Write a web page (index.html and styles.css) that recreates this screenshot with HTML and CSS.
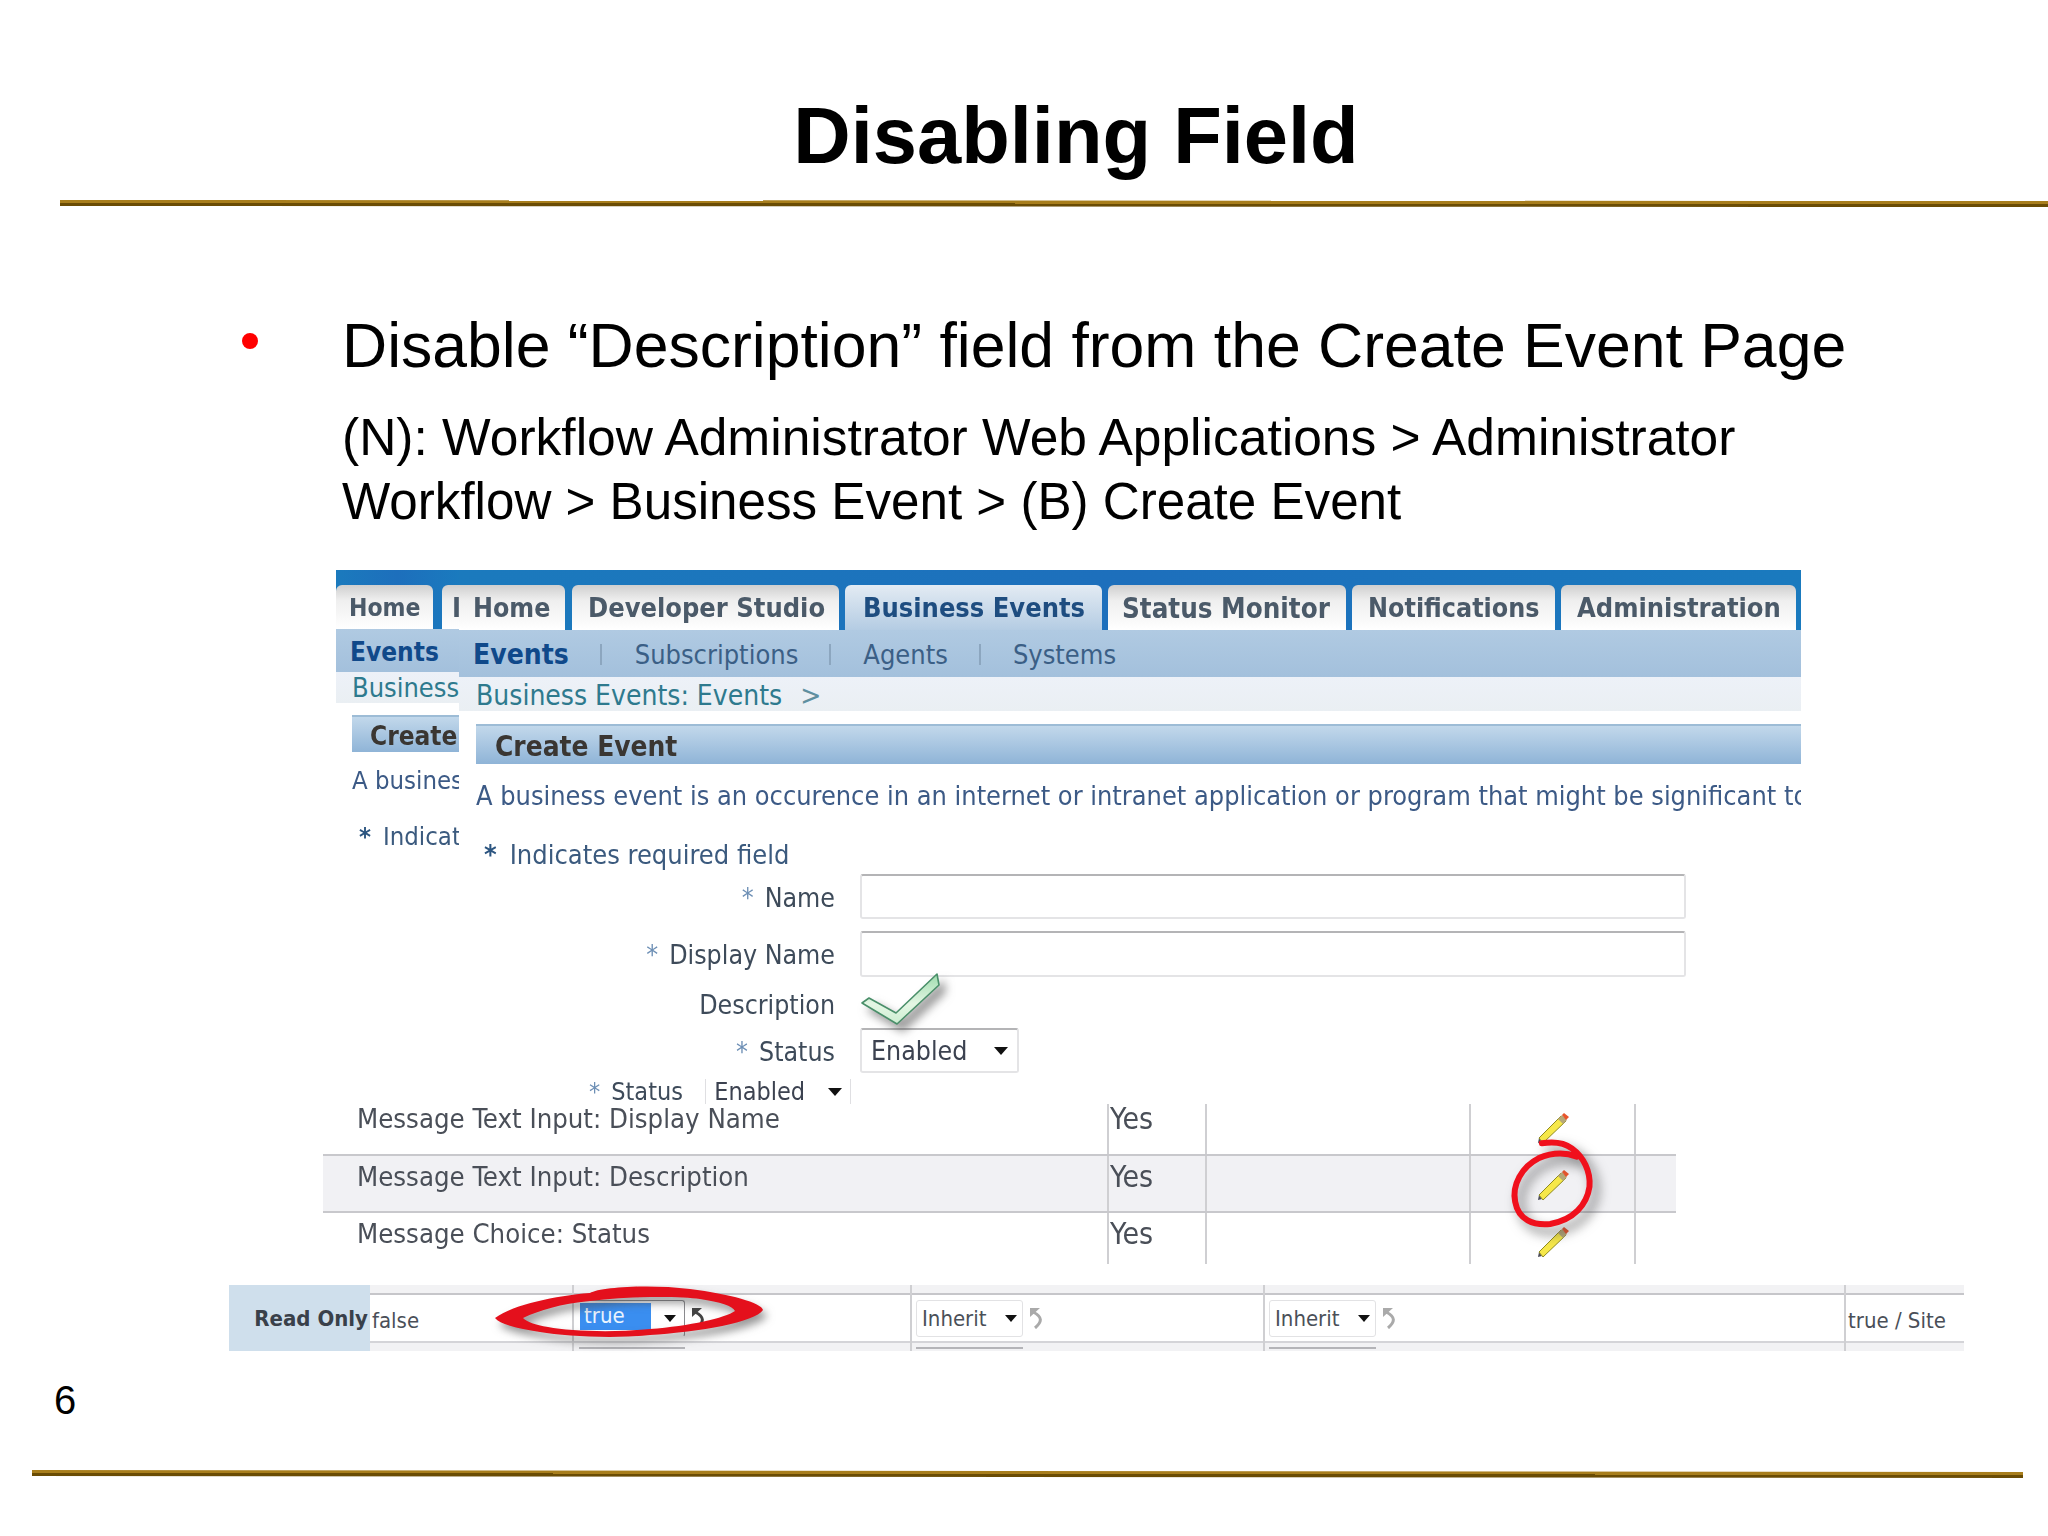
FILE: index.html
```html
<!DOCTYPE html>
<html lang="en">
<head>
<meta charset="utf-8">
<title>Disabling Field</title>
<link rel="stylesheet" href="styles.css">
</head>
<body>
<main class="slide">
  <header class="title-wrap"><h1 class="title">Disabling Field</h1></header>
  <div class="rule rule-top"></div>
  <section class="intro">
    <div class="dot"></div>
    <div class="intro-text">
      <p class="lead">Disable “Description” field from the Create Event Page</p>
      <p class="path">(N): Workflow Administrator Web Applications &gt; Administrator<br><span class="path-2">Workflow &gt; Business Event &gt; (B) Create Event</span></p>
    </div>
  </section>

  <section class="screen">
    <div class="crops">
      <div class="crop-left">
        <div class="tabs tabs-left">
          <div class="tab tab-a">Home</div>
          <div class="tab tab-b">I</div>
        </div>
        <div class="subnav subnav-left"><b class="sub-on">Events</b></div>
        <div class="crumb crumb-left">Business</div>
        <div class="pagehead pagehead-left">Create</div>
        <div class="desc desc-left">A busines</div>
        <div class="req req-left"><span class="star">*</span>Indicat</div>
      </div>
      <div class="crop-main">
        <div class="tabs tabs-main">
          <div class="tab t-home">Home</div>
          <div class="tab t-dev">Developer Studio</div>
          <div class="tab t-biz tab-on">Business Events</div>
          <div class="tab t-stat">Status Monitor</div>
          <div class="tab t-note">Notifications</div>
          <div class="tab t-adm">Administration</div>
        </div>
        <div class="subnav subnav-main">
          <b class="sub-on">Events</b><i class="sep"></i><span>Subscriptions</span><i class="sep"></i><span>Agents</span><i class="sep"></i><span>Systems</span>
        </div>
        <div class="crumb crumb-main">Business Events: Events<span class="gt">&gt;</span></div>
        <div class="pagehead pagehead-main">Create Event</div>
        <div class="desc desc-main">A business event is an occurence in an internet or intranet application or program that might be significant to</div>
        <div class="req req-main"><span class="star">*</span>Indicates required field</div>
        <div class="form">
          <div class="lbl r1"><span class="star2">*</span>Name</div>
          <div class="input r1"></div>
          <div class="lbl r2"><span class="star2">*</span>Display Name</div>
          <div class="input r2"></div>
          <div class="lbl r3">Description</div>
          <div class="ctl r3">
            <svg class="check" viewBox="0 0 90 60" aria-hidden="true">
              <defs><linearGradient id="chk" x1="0" y1="0" x2="0" y2="1"><stop offset="0" stop-color="#9fdcae"/><stop offset=".6" stop-color="#e4f6e4"/><stop offset="1" stop-color="#cdeed2"/></linearGradient></defs>
              <polygon points="3,33 10,28 37,43 78,4 80,15 38,54" fill="url(#chk)" stroke="#4a8f6a" stroke-width="1.6" stroke-linejoin="round"/>
            </svg>
          </div>
          <div class="lbl r4"><span class="star2">*</span>Status</div>
          <div class="select r4"><span>Enabled</span><i class="caret"></i></div>
        </div>
      </div>
    </div>

    <div class="status2">
      <span class="star2">*</span><span class="status2-lbl">Status</span>
      <div class="status2-sel"><span>Enabled</span><i class="caret"></i></div>
    </div>

    <div class="table">
      <div class="row row1">
        <div class="c c1">Message Text Input: Display Name</div>
        <div class="c c2">Yes</div>
        <div class="c c3"></div>
        <div class="c c4">
          <svg class="pencil" viewBox="0 0 32 32" aria-hidden="true"><polygon points="5,30 1,31 2,26" fill="#4a4a58"/><polygon points="2,26 24,4 29,9 6,31" fill="#f6e84a" stroke="#8f8a20" stroke-width="1"/><polygon points="21,7 25,3 30,8 26,12" fill="#b6a878"/><polygon points="25,3 27,1 32,5 29,8" fill="#e8552c"/></svg>
        </div>
        <div class="c c5"></div>
      </div>
      <div class="row row2">
        <div class="c c1">Message Text Input: Description</div>
        <div class="c c2">Yes</div>
        <div class="c c3"></div>
        <div class="c c4">
          <svg class="pencil" viewBox="0 0 32 32" aria-hidden="true"><polygon points="5,30 1,31 2,26" fill="#4a4a58"/><polygon points="2,26 24,4 29,9 6,31" fill="#f6e84a" stroke="#8f8a20" stroke-width="1"/><polygon points="21,7 25,3 30,8 26,12" fill="#b6a878"/><polygon points="25,3 27,1 32,5 29,8" fill="#e8552c"/></svg>
        </div>
        <div class="c c5"></div>
      </div>
      <div class="row row3">
        <div class="c c1">Message Choice: Status</div>
        <div class="c c2">Yes</div>
        <div class="c c3"></div>
        <div class="c c4">
          <svg class="pencil" viewBox="0 0 32 32" aria-hidden="true"><polygon points="5,30 1,31 2,26" fill="#4a4a58"/><polygon points="2,26 24,4 29,9 6,31" fill="#f6e84a" stroke="#8f8a20" stroke-width="1"/><polygon points="21,7 25,3 30,8 26,12" fill="#b6a878"/><polygon points="25,3 27,1 32,5 29,8" fill="#e8552c"/></svg>
        </div>
        <div class="c c5"></div>
      </div>
      <svg class="ring" viewBox="300 130 320 300" aria-hidden="true">
        <path d="M425 155 C455 150 490 152 515 170 C550 195 572 240 568 285 C560 340 520 385 450 397 C400 402 355 385 345 330 C335 280 365 225 415 200 C450 185 490 180 530 195" fill="none" stroke="#f0101c" stroke-width="18" stroke-linecap="round"/>
      </svg>
    </div>

    <div class="band">
      <div class="b-cell b-label"><b>Read Only</b></div>
      <div class="b-cell b-first"><div class="b-body"><span class="b-false">false</span></div></div>
      <div class="b-cell"><div class="b-body">
        <div class="mini mini-true"><span class="picked">true</span><i class="caret caret-sm"></i></div>
        <svg class="undo" viewBox="0 0 14 22" aria-hidden="true"><path d="M1 1 L11 1 L1 10 Z" fill="#444"/><path d="M4 5 C14 10 13 15 6 21" fill="none" stroke="#444" stroke-width="3"/></svg>
      </div><div class="peek peek-true"></div></div>
      <div class="b-cell"><div class="b-body">
        <div class="mini"><span>Inherit</span><i class="caret caret-sm"></i></div>
        <svg class="undo" viewBox="0 0 14 22" aria-hidden="true"><path d="M1 1 L11 1 L1 10 Z" fill="#aaa"/><path d="M4 5 C14 10 13 15 6 21" fill="none" stroke="#aaa" stroke-width="3"/></svg>
      </div><div class="peek"></div></div>
      <div class="b-cell"><div class="b-body">
        <div class="mini"><span>Inherit</span><i class="caret caret-sm"></i></div>
        <svg class="undo" viewBox="0 0 14 22" aria-hidden="true"><path d="M1 1 L11 1 L1 10 Z" fill="#aaa"/><path d="M4 5 C14 10 13 15 6 21" fill="none" stroke="#aaa" stroke-width="3"/></svg>
      </div><div class="peek"></div></div>
      <div class="b-cell"><div class="b-body"><span class="b-site">true / Site</span></div></div>
      <svg class="oval" viewBox="490 1280 290 70" aria-hidden="true">
        <path fill-rule="evenodd" fill="#e4101c" d="M495 1318 C515 1304 555 1296 590 1293 C600 1287 650 1284 690 1289 C730 1294 762 1303 763 1310 C755 1322 700 1332 650 1335 C610 1339 565 1336 540 1332 C515 1328 500 1324 495 1318 Z M523 1318 C540 1310 560 1304 590 1301 C630 1296 680 1296 700 1299 C720 1302 733 1306 735 1311 C725 1318 690 1326 650 1329 C610 1333 570 1331 548 1327 C535 1325 527 1322 523 1318 Z"/>
      </svg>
    </div>
  </section>

  <footer class="foot">
    <div class="pageno">6</div>
    <div class="rule rule-bottom"></div>
  </footer>
</main>
</body>
</html>
```
FILE: styles.css
```css
* { box-sizing: border-box; }
html, body { margin: 0; padding: 0; background: #fff; }
.slide { width: 2048px; height: 1536px; overflow: hidden; font-family: "Liberation Sans", Arial, sans-serif; color: #000; }

.title-wrap { height: 200px; padding: 0 0 19px 104px; display: flex; justify-content: center; align-items: flex-end; }
.title { margin: 0; font-size: 79.5px; line-height: 90px; font-weight: 700; }

.rule { height: 6px; background: linear-gradient(#a87e1c 0 50%, #6a4c04 50%); transform-origin: 0 50%; }
.rule-top { margin-left: 60px; transform: rotate(.03deg); }
.rule-bottom { margin-left: 32px; width: 1991px; transform: rotate(.055deg); }

.intro { height: 364px; display: flex; padding: 103px 0 0 242px; }
.dot { width: 16px; height: 16px; border-radius: 50%; background: #f00; margin: 24px 84px 0 0; flex: none; }
.lead { margin: 0; font-size: 62.5px; line-height: 72px; white-space: nowrap; }
.path { margin: 24px 0 0; font-size: 51.5px; line-height: 64px; white-space: nowrap; }
.path-2 { font-size: 51.15px; }

.screen { font-family: "DejaVu Sans Condensed", "DejaVu Sans", sans-serif; font-stretch: condensed; font-size: 27px; filter: blur(.5px); }
.crops { display: grid; grid-template-columns: 123px 1342px; margin-left: 336px; width: 1465px; height: 509px; }
.crop-left, .crop-main { min-width: 0; overflow: hidden; white-space: nowrap; }

.tabs { position: relative; display: flex; align-items: flex-end; background: linear-gradient(90deg, #1b7abd, #1d6fbc 50%, #1a7abe); }
.tabs-left { height: 59px; padding-top: 15px; }
.tabs-main { height: 60px; padding-top: 15px; }
.tab { height: 44px; border-radius: 6px 6px 0 0; background: linear-gradient(#cfcfcf, #efefef 35%, #fff); color: #4b5a69; font-weight: 700; line-height: 46px; overflow: hidden; white-space: nowrap; flex: none; }
.tabs-main .tab { height: 45px; }
.tab-a { width: 97px; padding-left: 13px; font-size: 24.5px; }
.tab-b { width: 17px; margin-left: 9px; padding-left: 10px; border-radius: 6px 0 0 0; }
.t-home { width: 106px; padding-left: 14px; border-top-left-radius: 0; font-size: 26.5px; }
.t-dev { width: 267px; margin-left: 7px; padding-left: 16px; }
.t-biz { width: 257px; margin-left: 6px; padding-left: 18px; }
.t-stat { width: 238px; margin-left: 6px; padding-left: 14px; font-size: 27.5px; }
.t-note { width: 203px; margin-left: 6px; padding-left: 16px; font-size: 26.6px; }
.t-adm { width: 235px; margin-left: 6px; padding-left: 16px; }
.tab-on { background: linear-gradient(#e3ebf3, #b4cce3); color: #1e4d80; }

.subnav { display: flex; align-items: center; background: linear-gradient(#b0cae2, #a3c0dc); color: #3b5f86; padding-top: 2px; }
.subnav-left { height: 43px; padding-left: 14px; }
.subnav-left .sub-on { font-size: 26px; }
.subnav-main { height: 47px; padding-left: 14px; }
.sub-on { color: #10498a; font-weight: 700; font-size: 28px; }
.sep { width: 2px; height: 21px; background: #8ca6bf; margin: 0 33px 0 31px; }
.sep:nth-of-type(n+2) { margin-right: 32px; }

.crumb { display: flex; align-items: center; background: linear-gradient(#edf1f8, #eaeff3); color: #2e7a8e; overflow: hidden; }
.crumb-left { height: 31px; padding-left: 16px; }
.crumb-main { height: 34px; padding-left: 17px; font-size: 28px; padding-top: 2px; }
.gt { margin-left: 18px; color: #5f8fa0; }

.pagehead { background: linear-gradient(#c2d8eb, #8fb4d7); border-top: 2px solid #9dbcd6; color: #3a3632; font-weight: 700; display: flex; align-items: center; padding-top: 2px; }
.pagehead-left { height: 37px; margin: 12px 0 0 16px; padding-left: 18px; font-size: 26px; }
.pagehead-main { height: 40px; margin: 13px 0 0 17px; padding-left: 19px; font-size: 27.8px; }

.desc { color: #3c5a86; line-height: 30px; height: 30px; overflow: hidden; }
.desc-left { margin: 13px 0 0 16px; font-size: 25.5px; }
.desc-main { margin: 17px 0 0 17px; font-size: 26.9px; }

.req { color: #3b5a7e; line-height: 30px; height: 30px; }
.req-left { margin: 26px 0 0 23px; font-size: 25.5px; }
.req-main { margin: 29px 0 0 25px; }
.star { color: #2c5580; font-weight: 700; margin-right: 12px; }
.req-main .star { margin-right: 13px; }
.star2 { color: #6d8fb5; margin-right: 11px; }

.form { display: grid; grid-template-columns: 376px 826px; column-gap: 25px; grid-template-rows: 45px 58px 51px 45px; margin-top: 4px; align-items: stretch; font-size: 26.5px; }
.lbl { text-align: right; color: #3e4b5a; }
.lbl.r1 { padding-top: 1px; line-height: 45px; }
.lbl.r2 { padding-top: 13px; line-height: 46px; }
.lbl.r3 { padding-top: 13px; line-height: 30px; }
.lbl.r4 { padding-top: 1px; line-height: 45px; }
.input { border: 2px solid #e4e4e6; border-top-color: #b4b4b6; border-radius: 3px; background: #fff; }
.input.r2 { margin-top: 12px; }
.ctl { position: relative; }
.check { position: absolute; left: -1px; top: -7px; width: 90px; height: 60px; filter: drop-shadow(6px 7px 5px rgba(60, 60, 60, .55)); overflow: visible; }
.select { width: 159px; display: flex; align-items: center; justify-content: space-between; padding: 0 9px 0 9px; border: 2px solid #e4e4e6; border-top-color: #b4b4b6; border-radius: 3px; color: #3c4250; font-size: 26.5px; }
.caret { display: block; width: 0; height: 0; border-left: 7px solid transparent; border-right: 7px solid transparent; border-top: 8px solid #111; }
.caret-sm { border-left-width: 6px; border-right-width: 6px; border-top-width: 7px; }

.status2 { display: flex; align-items: center; height: 25px; padding-left: 589px; color: #3e4b5a; white-space: nowrap; font-size: 25px; }
.status2-lbl { width: 94px; }
.status2-sel { width: 146px; height: 25px; display: flex; align-items: center; justify-content: space-between; padding: 0 8px 0 8px; border-left: 1px solid #dfdfe2; border-right: 1px solid #dfdfe2; color: #3c4250; }

.table { position: relative; margin-left: 323px; width: 1353px; white-space: nowrap; color: #4a4f58; }
.row { display: grid; grid-template-columns: 784px 98px 264px 165px 42px; }
.row1 { height: 50px; }
.row2 { height: 57px; background: #f1f1f4; border-top: 2px solid #c8c8cc; }
.row3 { height: 53px; border-top: 2px solid #c8c8cc; }
.c { line-height: 30px; }
.row2 .c, .row3 .c { padding-top: 6px; }
.c1 { padding-left: 34px; font-size: 27.3px; }
.c2 { border-left: 2px solid #cfcfd2; padding-left: 1px; font-size: 30px; }
.c3, .c5 { border-left: 2px solid #cfcfd2; }
.c4 { border-left: 2px solid #cfcfd2; display: flex; justify-content: center; align-items: flex-start; }
.pencil { width: 32px; height: 32px; margin-top: 8px; flex: none; }
.row2 .pencil, .row3 .pencil { margin-top: 7px; }
.ring { position: absolute; left: 1177px; top: 31px; width: 107px; height: 100px; filter: drop-shadow(6px 7px 6px rgba(60, 60, 60, .65)); }

.band { position: relative; display: grid; grid-template-columns: 141px 202px 338px 353px 581px 120px; width: 1735px; height: 66px; margin: 21px 0 0 229px; background: #f2f2f4; white-space: nowrap; color: #4a4f58; }
.b-cell { border-left: 2px solid #cfcfd2; min-width: 0; }
.b-label { background: #cfdfec; border-left: 0; display: flex; align-items: center; justify-content: flex-end; padding: 0 2px 0 0; color: #39404a; font-size: 22px; }
.b-first { border-left: 0; }
.b-body { display: flex; align-items: center; height: 50px; margin-top: 8px; background: #fff; border-top: 2px solid #c6c6ca; border-bottom: 2px solid #d4d4d8; font-size: 22px; }
.b-false { margin-left: 2px; padding-top: 4px; }
.b-site { margin-left: 2px; padding-top: 4px; }
.mini { width: 107px; height: 37px; margin-left: 4px; display: flex; align-items: center; justify-content: space-between; padding: 0 5px; border: 1px solid #e2e2e4; border-radius: 3px; flex: none; }
.mini-true { width: 106px; margin-left: 5px; padding: 0 8px 0 0; border-color: #8a8a8e #8a8a8e transparent transparent; }
.picked { width: 71px; height: 27px; background: #3a8ef0; color: #eaf4ff; line-height: 25px; padding-left: 4px; margin-top: -4px; }
.undo { width: 14px; height: 22px; margin-left: 6px; flex: none; }
.peek { width: 107px; height: 2px; margin: 4px 0 0 4px; background: #b4b4b8; }
.peek-true { width: 106px; margin-left: 5px; }
.oval { position: absolute; left: 261px; top: -5px; width: 290px; height: 70px; filter: drop-shadow(4px 6px 4px rgba(70, 70, 70, .55)); overflow: visible; }

.pageno { margin: 26px 0 0 54px; font-size: 40px; line-height: 46px; height: 93px; }
```
